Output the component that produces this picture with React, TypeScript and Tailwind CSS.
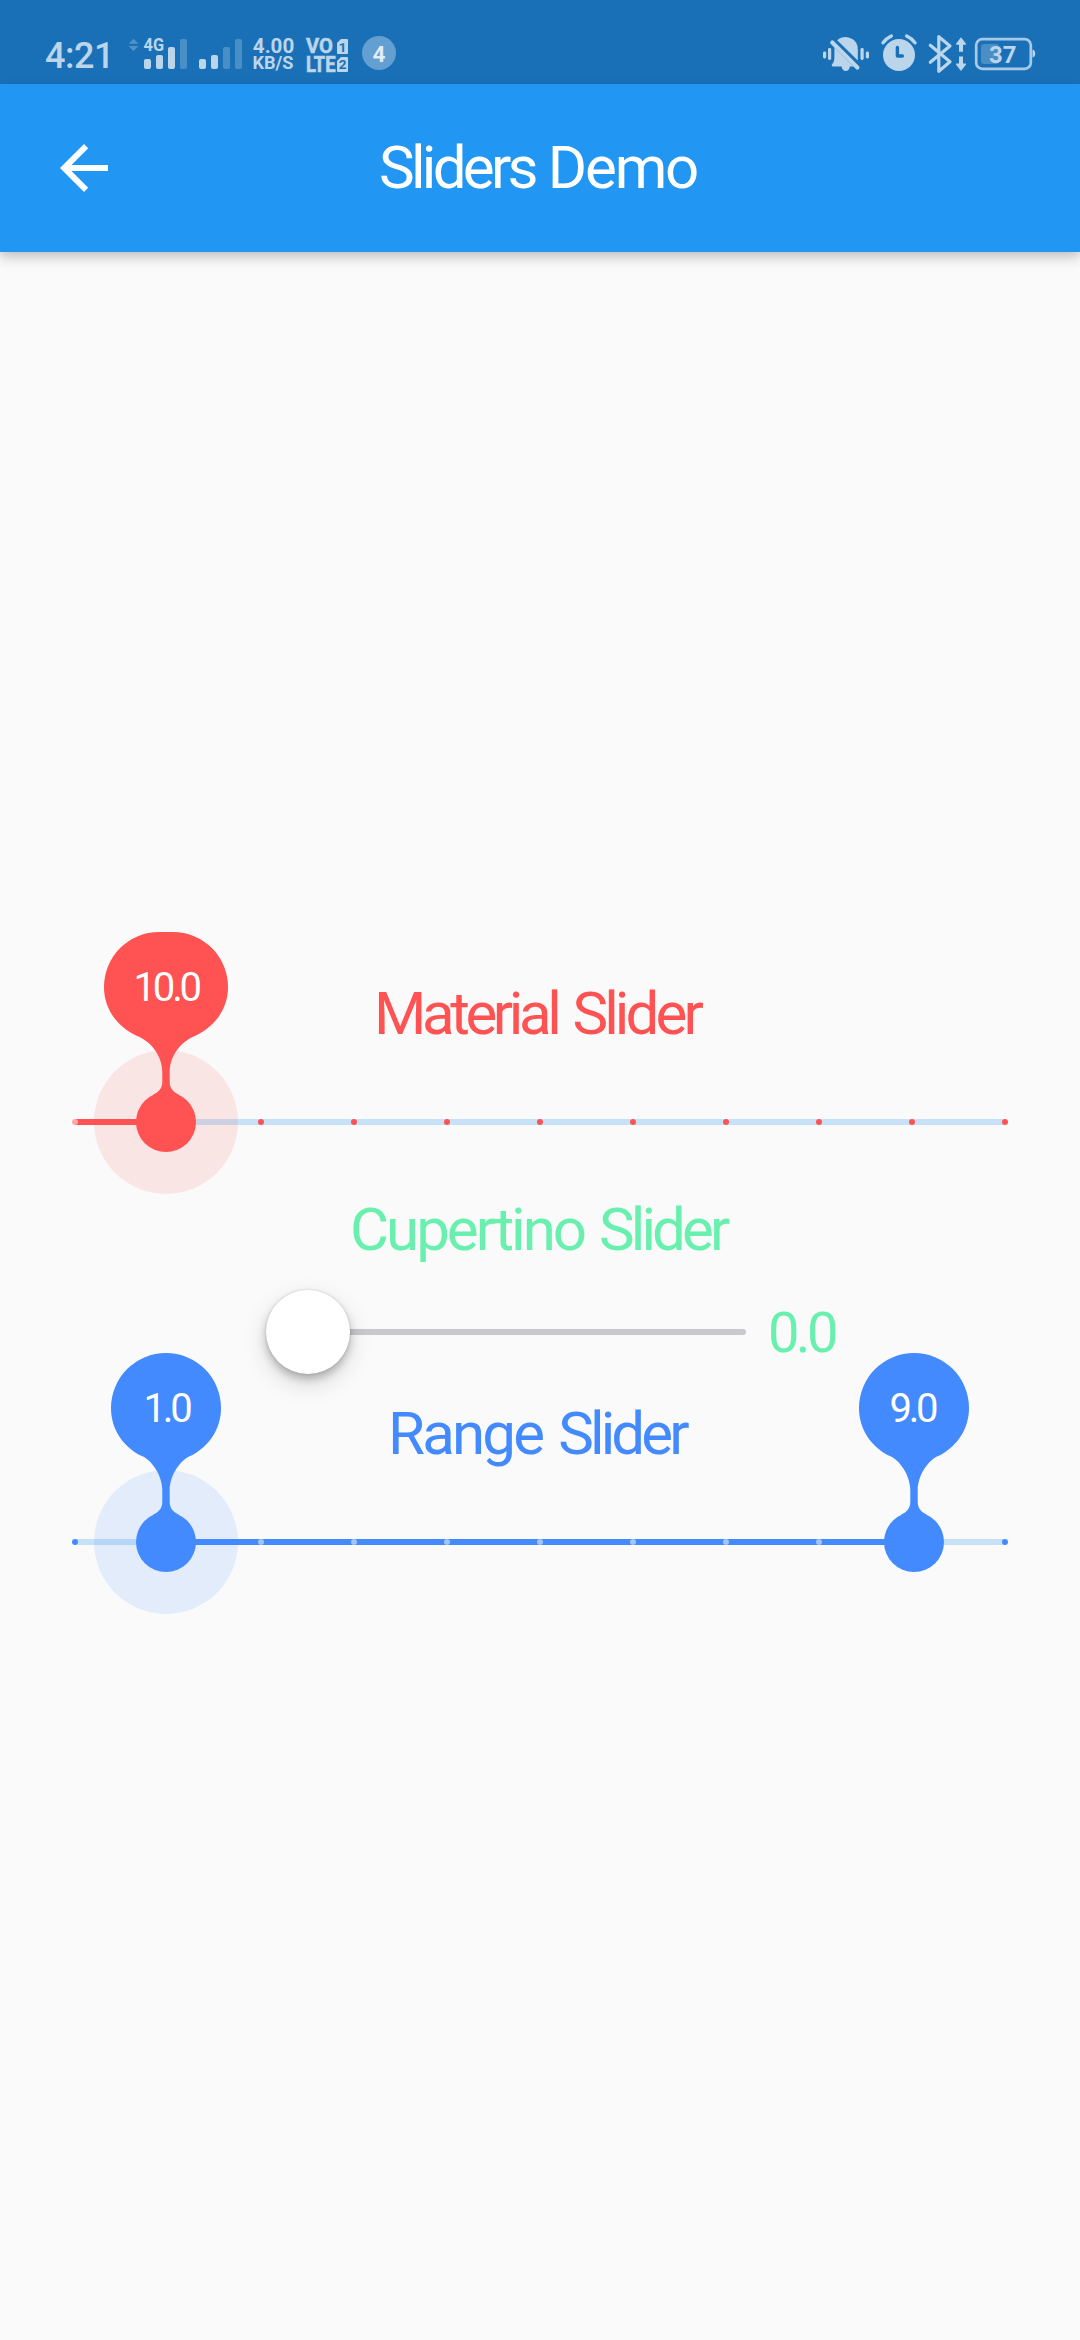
import React from "react";

const ROBOTO = "font-['Roboto','Noto_Sans',sans-serif]";

function SignalIcons() {
  return (
    <svg className="ml-[17px] shrink-0" width="116" height="84" viewBox="127 0 116 84" fill="#bbd5ea">
      <path d="M128.6 43.8l4.9-5 4.9 5zM128.6 46l4.9 5 4.9-5z" opacity=".35" />
      <text x="143.6" y="51" fontSize="17.5" fontWeight="700" textLength="20.5" lengthAdjust="spacingAndGlyphs">4G</text>
      <rect x="144" y="59" width="7" height="10" rx="2" />
      <rect x="156" y="55" width="7" height="14" rx="2" />
      <rect x="168" y="47" width="7" height="22" rx="2" />
      <rect x="180" y="39" width="7" height="30" rx="2" opacity=".3" />
      <rect x="199" y="59" width="7" height="10" rx="2" />
      <rect x="211" y="55" width="7" height="14" rx="2" />
      <rect x="223" y="47" width="7" height="22" rx="2" opacity=".3" />
      <rect x="235" y="39" width="7" height="30" rx="2" opacity=".3" />
    </svg>
  );
}

function NetworkIcons() {
  return (
    <svg className="ml-[8px] shrink-0" width="147" height="84" viewBox="251 0 147 84" fill="#bbd5ea" fontWeight="700">
      <text x="252.8" y="52.7" fontSize="20" textLength="41.5" lengthAdjust="spacingAndGlyphs">4.00</text>
      <text x="252.5" y="69.2" fontSize="18" textLength="41" lengthAdjust="spacingAndGlyphs">KB/S</text>
      <text x="306" y="53" fontSize="20.5" stroke="#bbd5ea" strokeWidth=".5" textLength="27" lengthAdjust="spacingAndGlyphs">VO</text>
      <text x="306" y="72" fontSize="22" stroke="#bbd5ea" strokeWidth=".7" textLength="29.5" lengthAdjust="spacingAndGlyphs">LTE</text>
      <path d="M341 39h6a1 1 0 0 1 1 1v13a1 1 0 0 1-1 1h-9a1 1 0 0 1-1-1v-10z" />
      <path d="M341 57h6a1 1 0 0 1 1 1v13a1 1 0 0 1-1 1h-9a1 1 0 0 1-1-1v-10z" />
      <text x="342.5" y="51.5" fontSize="13.5" textAnchor="middle" fill="#1a70b7">1</text>
      <text x="342.7" y="69.3" fontSize="13.5" textAnchor="middle" fill="#1a70b7">2</text>
      <circle cx="379" cy="53" r="17" fill="#639fd0" />
      <text x="379" y="62" fontSize="22.5" textAnchor="middle" fill="#e0edf7">4</text>
    </svg>
  );
}

function SystemIcons() {
  return (
    <svg className="ml-auto mr-[43px] shrink-0" width="215" height="84" viewBox="822 0 215 84" fill="#bbd5ea">
      <rect x="823" y="51.5" width="3.2" height="7" rx="1.4" />
      <rect x="828" y="48" width="3.2" height="12" rx="1.4" />
      <rect x="860.5" y="48" width="3.2" height="12" rx="1.4" />
      <rect x="865.8" y="51.5" width="3.2" height="7" rx="1.4" />
      <path d="M834.4 47.5L853.5 66.6H849.8Q849.3 71 845.8 71Q842.2 71 841.6 66.6H833Q831.2 66.6 831.8 64.8Q834.4 62 834.4 58Z" />
      <path d="M837.2 40.2Q840.8 37 845.8 37Q857.8 38.5 857.8 50V60.4Z" />
      <path d="M832.3 42.5L857.4 67.5" stroke="#bbd5ea" strokeWidth="4.2" strokeLinecap="round" />
      <circle cx="899" cy="55" r="16" />
      <path d="M883 42.8q3.5-4.6 8.3-6.8M915 42.8q-3.5-4.6-8.3-6.8" fill="none" stroke="#bbd5ea" strokeWidth="3.4" strokeLinecap="round" />
      <path d="M897.4 47.4v8.6h5" fill="none" stroke="#1a70b7" strokeWidth="3.4" strokeLinecap="round" strokeLinejoin="round" />
      <path d="M930.3 45.3L950 61.7L938.8 71.3V36.7L950 46L930.3 62.2" fill="none" stroke="#bbd5ea" strokeWidth="3.2" strokeLinecap="round" strokeLinejoin="round" />
      <path d="M961 37.3l5 6.5q.3 1-.7 1H963v7h-4v-7h-2.300q-1 0-.7-1zM961 71l5-6.500q.3-1-.7-1H963v-7h-4v7h-2.300q-1 0-.7 1z" />
      <rect x="976.2" y="39.200" width="54.600" height="29.600" rx="6" fill="none" stroke="#a8c9e5" strokeWidth="2.700" />
      <path d="M1032.500 49.500q2.700.5 2.700 4t-2.700 4z" />
      <rect x="981" y="44" width="18" height="20" rx="3" opacity=".3" />
      <text x="989" y="62.700" fontSize="24" fontWeight="700" textLength="27.500" lengthAdjust="spacingAndGlyphs">37</text>
    </svg>
  );
}

function StatusBar() {
  return (
    <div className="flex h-[84px] items-center bg-[#1a70b7] text-[#bbd5ea]">
      <div className="ml-[45px] mt-[27px] w-[65px] text-[36px] leading-none tracking-[-0.5px] font-medium">4:21</div>
      <SignalIcons />
      <NetworkIcons />
      <SystemIcons />
    </div>
  );
}

function AppBar() {
  return (
    <header className="relative z-10 flex h-[168px] items-center bg-[#2196f3] text-white shadow-[0_6px_12px_rgba(0,0,0,0.2),0_3px_6px_rgba(0,0,0,0.03)]">
      <svg className="ml-[48px] size-[72px] shrink-0" viewBox="0 0 24 24" fill="currentColor">
        <path d="M20 11H7.830l5.590-5.590L12 4l-8 8 8 8 1.410-1.410L7.830 13H20v-2z" />
      </svg>
      <h1 className="ml-[259px] flex gap-[13px] whitespace-nowrap text-[60px] leading-[72px]">
        <span className="tracking-[-3.7px]">Sliders</span>
        <span className="tracking-[-2.2px]">Demo</span>
      </h1>
    </header>
  );
}

const PATHS = {
  round:
    "M-26.500 -87C-43 -96 -55 -113 -55 -134A55 55 0 0 1 55 -134C55 -113 43 -96 26.500 -87C14 -83 3.700 -66 3.700 -52V-40C3.700 -33 8 -30 13 -27L0 0L-13 -27C-8 -30 -3.700 -33 -3.700 -40V-52C-3.700 -66 -14 -83 -26.500 -87Z",
  wide:
    "M-29.500 -86.300C-50 -96 -62 -114 -62 -135A55 55 0 0 1 -7 -190H7A55 55 0 0 1 62 -135C62 -114 50 -96 29.500 -86.300C15 -81 3.700 -66 3.700 -50V-40C3.700 -33 8 -30 13 -27L0 0L-13 -27C-8 -30 -3.700 -33 -3.700 -40V-50C-3.700 -66 -15 -81 -29.500 -86.300Z",
};

function Thumb({ at, value, color, halo, shape, labelClass }: {
  at: number;
  value: string;
  color: string;
  halo?: string;
  shape: keyof typeof PATHS;
  labelClass: string;
}) {
  return (
    <div className="absolute top-[72px] size-0" style={{ left: `${at}%` }}>
      <svg className="absolute -left-[74px] -top-[194px]" width="148" height="270" viewBox="-74 -194 148 270">
        {halo && <circle r="72" fill={halo} />}
        <path d={PATHS[shape]} fill={color} />
        <circle r="30" fill={color} />
      </svg>
      <span className={`absolute whitespace-nowrap text-[40px] leading-[47px] tracking-[-3.2px] text-white ${labelClass}`}>{value}</span>
    </div>
  );
}

function Ticks({ colors }: { colors: string[] }) {
  return (
    <div className="absolute inset-x-0 top-[69px] flex justify-between">
      {colors.map((c, i) => (
        <span key={i} className="size-1.5 rounded-full" style={{ backgroundColor: c }} />
      ))}
    </div>
  );
}

function MaterialSlider() {
  return (
    <div className="relative mx-[72px] h-[144px]">
      <div className="absolute inset-x-[3px] top-[69px] flex h-1.5">
        <div className="w-[10%] bg-[#ff5252]" />
        <div className="grow bg-[#c6e1f8]" />
      </div>
      <Ticks colors={["#ffa9a9", ...Array(10).fill("#ff5252")]} />
      <Thumb at={10} value="10.0" color="#ff5252" halo="rgba(255,82,82,0.12)" shape="wide" labelClass="-left-[32px] -top-[158px]" />
    </div>
  );
}

function CupertinoSlider() {
  return (
    <div className="flex h-[132px] items-center pl-[265px]">
      <div className="relative flex h-[84px] w-[481px] items-center pl-[20px]">
        <div className="h-1.5 w-full rounded-full bg-[#c9c9cb]" />
        <div className="absolute left-[0.500px] top-0 size-[84px] rounded-full bg-white shadow-[0_0_0_1.500px_rgba(0,0,0,0.04),0_9px_24px_rgba(0,0,0,0.15),0_5px_8px_rgba(0,0,0,0.22)]" />
      </div>
      <div className="ml-[22px] mt-[2px] text-[56px] leading-[66px] tracking-[-3.6px] text-[#69f0ae]">0.0</div>
    </div>
  );
}

function RangeSlider() {
  const ticks = Array.from({ length: 11 }, (_, i) => (i > 0 && i < 10 ? "#a1c5ff" : "#448aff"));
  return (
    <div className="relative mx-[72px] h-[144px]">
      <div className="absolute inset-x-[3px] top-[69px] flex h-1.5">
        <div className="w-[10%] bg-[#c6e1f8]" />
        <div className="grow bg-[#448aff]" />
        <div className="w-[10%] bg-[#c6e1f8]" />
      </div>
      <Ticks colors={ticks} />
      <Thumb at={10} value="1.0" color="#448aff" halo="rgba(68,138,255,0.12)" shape="round" labelClass="-left-[22px] -top-[157px]" />
      <Thumb at={90} value="9.0" color="#448aff" shape="round" labelClass="-left-[25px] -top-[157px]" />
    </div>
  );
}

function SliderTitle({ name, className, nameClass }: { name: string; className: string; nameClass: string }) {
  return (
    <h2 className={`flex whitespace-nowrap text-[60px] leading-[72px] ${className}`}>
      <span className={nameClass}>{name}</span>
      <span className="tracking-[-3.9px]">Slider</span>
    </h2>
  );
}

export default function App() {
  return (
    <div className={`flex h-[2340px] w-[1080px] flex-col overflow-hidden bg-[#fafafa] ${ROBOTO}`}>
      <StatusBar />
      <AppBar />
      <main className="flex grow flex-col justify-center">
        <SliderTitle name="Material" className="gap-[15px] pl-[374px] text-[#ff5252]" nameClass="tracking-[-4.4px]" />
        <MaterialSlider />
        <SliderTitle name="Cupertino" className="gap-[15px] pl-[350px] text-[#69f0ae]" nameClass="tracking-[-3px]" />
        <CupertinoSlider />
        <SliderTitle name="Range" className="gap-[16px] pl-[388px] text-[#448aff]" nameClass="tracking-[-2.8px]" />
        <RangeSlider />
      </main>
    </div>
  );
}
